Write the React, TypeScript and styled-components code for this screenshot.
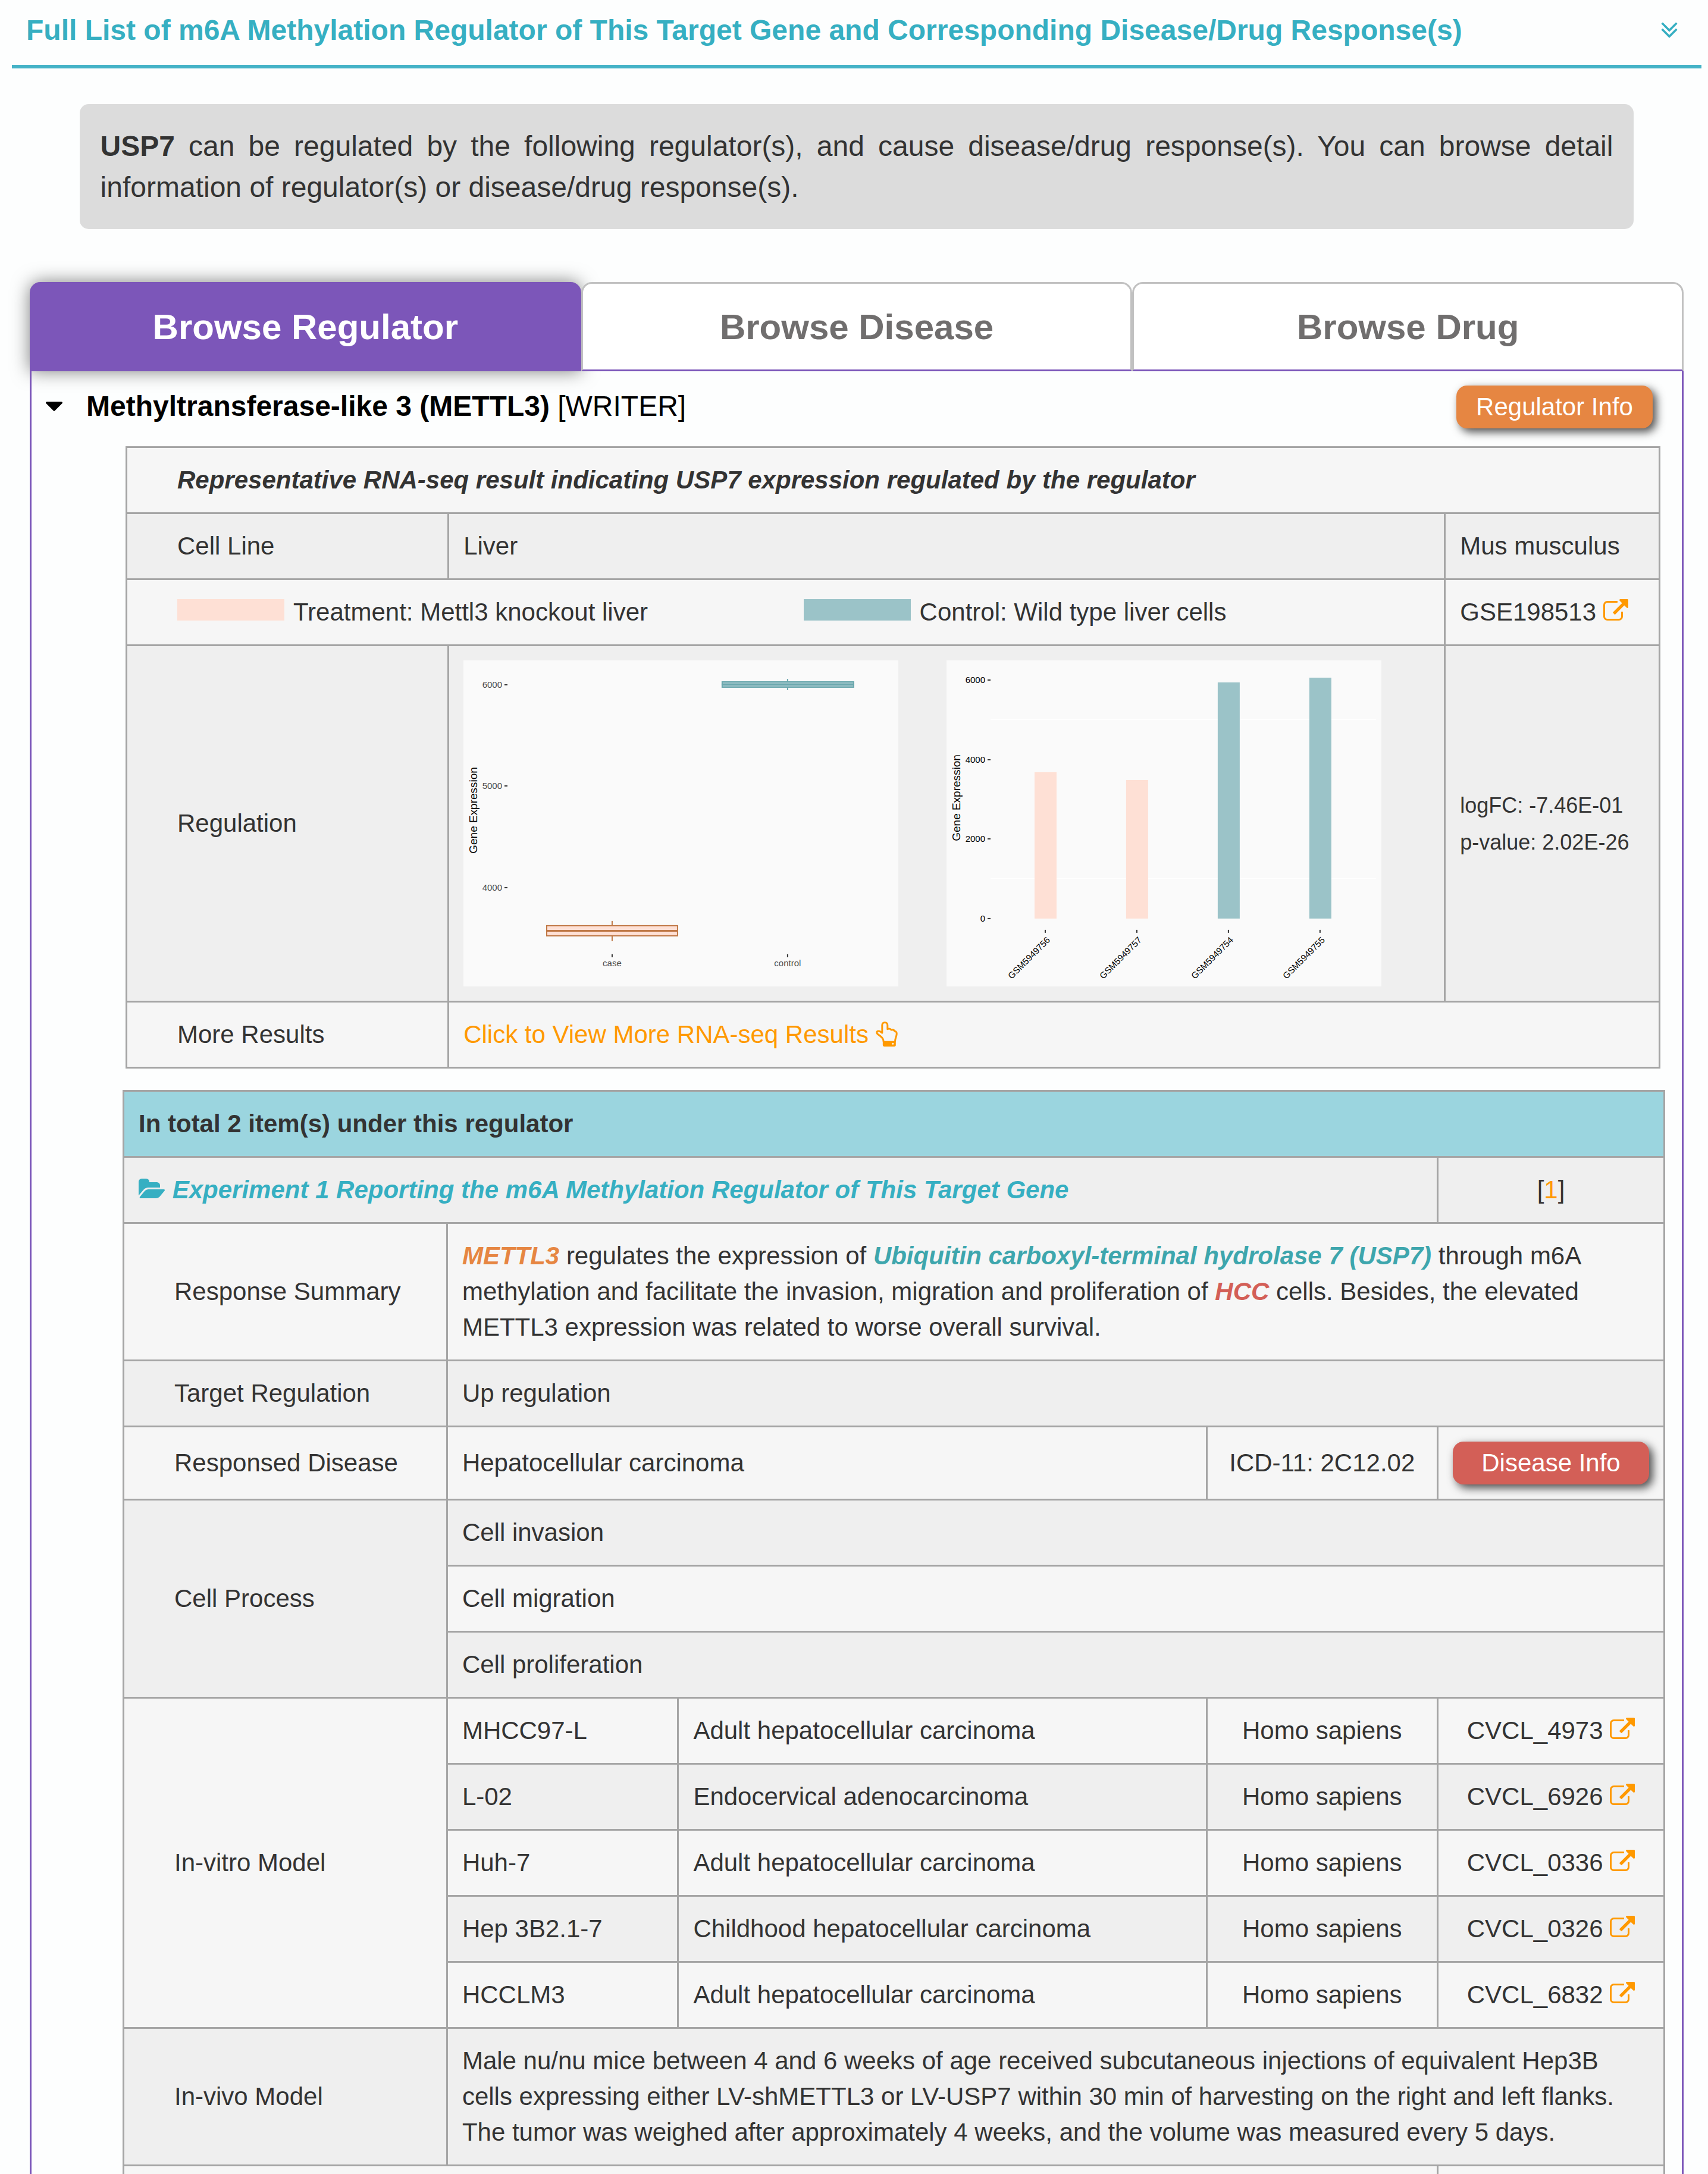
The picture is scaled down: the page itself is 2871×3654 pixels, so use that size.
import React from "react";
import styled, { createGlobalStyle, css } from "styled-components";

const color = {
  page: "#fdfefe",
  text: "#333333",
  teal: "#36afc2",
  purple: "#7c56b9",
  orange: "#e68642",
  red: "#d35f57",
  link: "#ff9900",
  line: "#a5a5a5",
  tabLine: "#c1c1c1",
  rowLight: "#f6f6f6",
  rowDark: "#efefef",
  rowHead: "#9bd5df",
  treatment: "#fee0d5",
  control: "#9bc3c8",
};

const GlobalStyle = createGlobalStyle`
  *, *::before, *::after { box-sizing: border-box; }
  body {
    margin: 0;
    background: ${color.page};
    color: ${color.text};
    font-family: "Liberation Sans", Arial, Helvetica, sans-serif;
    font-size: 42px;
    line-height: 60px;
  }
  h2, p { margin: 0; }
  button { font-family: inherit; cursor: pointer; }
  a { text-decoration: none; }
`;

const Page = styled.div`
  height: 100vh;
  overflow: hidden;
  padding: 0 11px 0 20px;
  display: flex;
  flex-direction: column;
`;

const SectionHeader = styled.header`
  display: flex;
  align-items: center;
  justify-content: space-between;
  padding: 21px 30px 28px 24px;
  border-bottom: 6px solid #45b3c7;
  color: ${color.teal};
`;

const SectionTitle = styled.h2`
  font-size: 48px;
  line-height: 60px;
  font-weight: bold;
`;

const CollapseButton = styled.button`
  display: flex;
  padding: 0;
  border: 0;
  background: none;
  color: inherit;
`;

const Notice = styled.p`
  margin: 60px 4% 89px;
  padding: 36px 35px;
  border-radius: 15px;
  background: #dcdcdc;
  font-size: 48px;
  line-height: 69px;
  text-align: justify;
`;

const TabList = styled.div`
  display: flex;
  margin: 0 30px;
`;

const Tab = styled.button<{ $active?: boolean }>`
  flex: 1 1 0;
  height: 150px;
  padding: 2px 0 0;
  border: 3px solid ${color.tabLine};
  border-bottom-color: ${color.purple};
  border-radius: 18px 18px 0 0;
  background: #ffffff;
  color: #706e6e;
  font-size: 60px;
  font-weight: bold;
  line-height: 84px;
  ${({ $active }) =>
    $active &&
    css`
      border-color: ${color.purple};
      background: ${color.purple};
      color: #ffffff;
      box-shadow: 0 0 30px rgba(0, 0, 0, 0.5);
    `}
`;

const Panel = styled.section`
  flex: 1 0 auto;
  margin: 0 30px;
  border: solid ${color.purple};
  border-width: 0 3px;
`;

const RegulatorBar = styled.div`
  display: flex;
  justify-content: space-between;
  align-items: flex-start;
  padding: 24px 49px 30px 24px;
`;

const RegulatorToggle = styled.button`
  display: flex;
  align-items: center;
  gap: 40px;
  padding: 0;
  border: 0;
  background: none;
  color: #000000;
  font-size: 48px;
  line-height: 69px;
`;

const InfoLink = styled.a<{ $tone: string }>`
  display: block;
  width: 330px;
  padding: 6px 0;
  border-radius: 18px;
  background: ${({ $tone }) => $tone};
  box-shadow: 6px 6px 15px rgba(0, 0, 0, 0.7);
  color: #ffffff;
  text-align: center;
`;

const Grid = styled.table`
  border-collapse: collapse;
  table-layout: fixed;

  td, th {
    padding: 24px;
    border: 3px solid ${color.line};
    text-align: left;
    font-weight: normal;
  }
  tr:nth-child(odd) { background: ${color.rowLight}; }
  tr:nth-child(even) { background: ${color.rowDark}; }
`;

const SequencingGrid = styled(Grid)`
  width: calc(100% - 194px);
  margin: 0 36px 36px 158px;
`;

const ExperimentGrid = styled(Grid)`
  width: calc(100% - 181px);
  margin: 0 28px 0 153px;
`;

const Col = styled.col<{ $width?: string }>`
  width: ${({ $width }) => $width ?? "auto"};
`;

const HeadCell = styled.th`
  && {
    background: ${color.rowHead};
    font-weight: bold;
  }
`;

const LabelCell = styled.th`
  && { padding-left: 84px; }
`;

const CaptionCell = styled(LabelCell)`
  && { font-weight: bold; font-style: italic; }
`;

const LegendCell = styled.td`
  && { padding-left: 84px; }
`;

const CenterCell = styled.td`
  && { text-align: center; }
`;

const FillerCell = styled.td`
  height: 111px;
`;

const Stat = styled.span`
  font-size: 36px;
`;

const Legend = styled.div`
  display: grid;
  grid-template-columns: 1fr 1fr;
`;

const Swatch = styled.span<{ $fill: string }>`
  display: inline-block;
  width: 180px;
  height: 36px;
  margin-right: 15px;
  background: ${({ $fill }) => $fill};
`;

const ChartPair = styled.div`
  display: flex;
  gap: 5%;
`;

const Chart = styled.svg`
  display: block;
  width: 45%;
  background: #fafafa;
  font-size: 15px;
`;

const TextLink = styled.a`
  color: ${color.link};
`;

const PlainLink = styled.a`
  color: inherit;
  white-space: nowrap;
`;

const Term = styled.strong<{ $tone: string }>`
  font-style: italic;
  color: ${({ $tone }) => $tone};
`;

const InlineIcon = styled.svg`
  vertical-align: -6px;
`;

const ExternalIcon = () => (
  <InlineIcon width="42" height="42" viewBox="0 0 1792 1792" fill={color.link} aria-hidden="true">
    <path d="M1408 928v320q0 119-84.5 203.5t-203.5 84.5h-832q-119 0-203.5-84.5t-84.5-203.5v-832q0-119 84.5-203.5t203.5-84.5h704q14 0 23 9t9 23v64q0 14-9 23t-23 9h-704q-66 0-113 47t-47 113v832q0 66 47 113t113 47h832q66 0 113-47t47-113v-320q0-14 9-23t23-9h64q14 0 23 9t9 23zm384-864v512q0 26-19 45t-45 19-45-19l-176-176-652 652q-10 10-23 10t-23-10l-114-114q-10-10-10-23t10-23l652-652-176-176q-19-19-19-45t19-45 45-19h512q26 0 45 19t19 45z" />
  </InlineIcon>
);

const FolderIcon = () => (
  <InlineIcon width="45" height="42" viewBox="0 0 1920 1792" fill={color.teal} aria-hidden="true">
    <path d="M1879 952q0 31-31 66l-336 396q-43 51-120.5 86.5t-143.5 35.5h-1088q-34 0-60.5-13t-26.5-43q0-31 31-66l336-396q43-51 120.5-86.5t143.5-35.5h1088q34 0 60.5 13t26.5 43zm-343-344v160h-832q-94 0-197 47.5t-164 119.5l-337 396-5 6q0-4-.5-12.5t-.5-12.5v-960q0-92 66-158t158-66h320q92 0 158 66t66 158v32h544q92 0 158 66t66 158z" />
  </InlineIcon>
);

const DoubleChevronIcon = () => (
  <svg width="48" height="48" viewBox="0 0 1792 1792" fill="currentColor" aria-hidden="true">
    <path d="M1395 864q0 13-10 23l-466 466q-10 10-23 10t-23-10l-466-466q-10-10-10-23t10-23l50-50q10-10 23-10t23 10l393 393 393-393q10-10 23-10t23 10l50 50q10 10 10 23zm0-384q0 13-10 23l-466 466q-10 10-23 10t-23-10l-466-466q-10-10-10-23t10-23l50-50q10-10 23-10t23 10l393 393 393-393q10-10 23-10t23 10l50 50q10 10 10 23z" />
  </svg>
);

const CaretIcon = () => (
  <svg width="28" height="16" viewBox="384 640 1024 576" fill="currentColor" aria-hidden="true">
    <path d="M1408 704q0 26-19 45l-448 448q-19 19-45 19t-45-19l-448-448q-19-19-19-45t19-45 45-19h896q26 0 45 19t19 45z" />
  </svg>
);

const HandIcon = () => (
  <InlineIcon width="37" height="42" viewBox="0 0 110 126" aria-hidden="true">
    <path
      d="M39 101C39 86 31 80 20 71L9 63C3 58 4 48 13 48C20 47 26 52 32 57V18C32 0 59 0 59 18V38C66 35 74 37 78 42C86 40 93 43 95 49C103 49 106 55 105 64C104 76 97 85 97 101"
      fill="none"
      stroke={color.link}
      strokeWidth="9"
      strokeLinejoin="round"
    />
    <path d="M35 98H101V118Q101 126 93 126H43Q35 126 35 118Z" fill={color.link} />
    <circle cx="86" cy="112" r="4.5" fill={color.rowLight} />
  </InlineIcon>
);

const AXIS = "#333333";
const TICK_TEXT = "#4d4d4d";

const BoxPlot = () => (
  <Chart viewBox="0 0 731 548" role="img" aria-label="Gene expression box plot">
    <text transform="translate(23 252) rotate(-90)" textAnchor="middle" fontSize="19">
      Gene Expression
    </text>
    {[
      { value: 6000, y: 41 },
      { value: 5000, y: 211 },
      { value: 4000, y: 382 },
    ].map(({ value, y }) => (
      <g key={value}>
        <text x="65" y={y + 5} textAnchor="end" fill={TICK_TEXT}>
          {value}
        </text>
        <path d={`M69 ${y}h5`} stroke={AXIS} strokeWidth="2" />
      </g>
    ))}
    {[
      { name: "case", x: 250 },
      { name: "control", x: 545 },
    ].map(({ name, x }) => (
      <g key={name}>
        <path d={`M${x} 494v5`} stroke={AXIS} strokeWidth="2" />
        <text x={x} y="514" textAnchor="middle" fill={TICK_TEXT}>
          {name}
        </text>
      </g>
    ))}
    <g stroke="#6aa7ad" strokeWidth="2">
      <path d="M545 31V50" />
      <rect x="435" y="36" width="221" height="9" fill={color.control} />
      <path d="M434 40.5H657" strokeWidth="3" />
    </g>
    <g stroke="#bf7745" strokeWidth="2">
      <path d="M250 438V472" />
      <rect x="140" y="446" width="220" height="17" fill={color.treatment} />
      <path d="M139 454.5H361" strokeWidth="3" />
    </g>
  </Chart>
);

const BarChart = () => (
  <Chart viewBox="0 0 731 548" role="img" aria-label="Gene expression by sample">
    <path d="M74 99.5H722M74 366.5H722" stroke="#ffffff" />
    <text transform="translate(23 231) rotate(-90)" textAnchor="middle" fontSize="19">
      Gene Expression
    </text>
    {[
      { value: 6000, y: 33 },
      { value: 4000, y: 167 },
      { value: 2000, y: 300 },
      { value: 0, y: 434 },
    ].map(({ value, y }) => (
      <g key={value}>
        <text x="65" y={y + 5} textAnchor="end">
          {value}
        </text>
        <path d={`M69 ${y}h5`} stroke={AXIS} strokeWidth="2" />
      </g>
    ))}
    {[
      { name: "GSM5949756", x: 148, top: 188, fill: color.treatment },
      { name: "GSM5949757", x: 302, top: 201, fill: color.treatment },
      { name: "GSM5949754", x: 456, top: 37, fill: color.control },
      { name: "GSM5949755", x: 610, top: 29, fill: color.control },
    ].map(({ name, x, top, fill }) => (
      <g key={name}>
        <rect x={x} y={top} width="37" height={434 - top} fill={fill} />
        <path d={`M${x + 18} 453v5`} stroke={AXIS} strokeWidth="2" />
        <text transform={`translate(${x + 27} 471) rotate(-45)`} textAnchor="end">
          {name}
        </text>
      </g>
    ))}
  </Chart>
);

const cellLines = [
  { name: "MHCC97-L", disease: "Adult hepatocellular carcinoma", id: "CVCL_4973" },
  { name: "L-02", disease: "Endocervical adenocarcinoma", id: "CVCL_6926" },
  { name: "Huh-7", disease: "Adult hepatocellular carcinoma", id: "CVCL_0336" },
  { name: "Hep 3B2.1-7", disease: "Childhood hepatocellular carcinoma", id: "CVCL_0326" },
  { name: "HCCLM3", disease: "Adult hepatocellular carcinoma", id: "CVCL_6832" },
];

const processes = ["Cell invasion", "Cell migration", "Cell proliferation"];

const SequencingTable = () => (
  <SequencingGrid>
    <colgroup>
      <Col $width="21%" />
      <Col />
      <Col $width="14%" />
    </colgroup>
    <tbody>
      <tr>
        <CaptionCell colSpan={3}>
          Representative RNA-seq result indicating USP7 expression regulated by the regulator
        </CaptionCell>
      </tr>
      <tr>
        <LabelCell scope="row">Cell Line</LabelCell>
        <td>Liver</td>
        <td>Mus musculus</td>
      </tr>
      <tr>
        <LegendCell colSpan={2}>
          <Legend>
            <span>
              <Swatch $fill={color.treatment} />
              Treatment: Mettl3 knockout liver
            </span>
            <span>
              <Swatch $fill={color.control} />
              Control: Wild type liver cells
            </span>
          </Legend>
        </LegendCell>
        <td>
          <PlainLink href="#gse198513">
            GSE198513 <ExternalIcon />
          </PlainLink>
        </td>
      </tr>
      <tr>
        <LabelCell scope="row">Regulation</LabelCell>
        <td>
          <ChartPair>
            <BoxPlot />
            <BarChart />
          </ChartPair>
        </td>
        <td>
          <Stat>logFC: -7.46E-01</Stat>
          <br />
          <Stat>p-value: 2.02E-26</Stat>
        </td>
      </tr>
      <tr>
        <LabelCell scope="row">More Results</LabelCell>
        <td colSpan={2}>
          <TextLink href="#more-results">
            Click to View More RNA-seq Results <HandIcon />
          </TextLink>
        </td>
      </tr>
    </tbody>
  </SequencingGrid>
);

const ExperimentTable = () => (
  <ExperimentGrid>
    <colgroup>
      <Col $width="21%" />
      <Col $width="15%" />
      <Col />
      <Col $width="15%" />
      <Col $width="381px" />
    </colgroup>
    <tbody>
      <tr>
        <HeadCell colSpan={5}>In total 2 item(s) under this regulator</HeadCell>
      </tr>
      <tr>
        <td colSpan={4}>
          <FolderIcon />{" "}
          <Term $tone={color.teal}>Experiment 1 Reporting the m6A Methylation Regulator of This Target Gene</Term>
        </td>
        <CenterCell>
          [<TextLink href="#reference-1">1</TextLink>]
        </CenterCell>
      </tr>
      <tr>
        <LabelCell scope="row">Response Summary</LabelCell>
        <td colSpan={4}>
          <Term $tone={color.orange}>METTL3</Term> regulates the expression of{" "}
          <Term $tone="#3ea6ad">Ubiquitin carboxyl-terminal hydrolase 7 (USP7)</Term> through m6A methylation and
          facilitate the invasion, migration and proliferation of <Term $tone={color.red}>HCC</Term> cells. Besides,
          the elevated METTL3 expression was related to worse overall survival.
        </td>
      </tr>
      <tr>
        <LabelCell scope="row">Target Regulation</LabelCell>
        <td colSpan={4}>Up regulation</td>
      </tr>
      <tr>
        <LabelCell scope="row">Responsed Disease</LabelCell>
        <td colSpan={2}>Hepatocellular carcinoma</td>
        <CenterCell>ICD-11: 2C12.02</CenterCell>
        <td>
          <InfoLink $tone={color.red} href="#disease">
            Disease Info
          </InfoLink>
        </td>
      </tr>
      {processes.map((name, i) => (
        <tr key={name}>
          {i === 0 && (
            <LabelCell scope="rowgroup" rowSpan={processes.length}>
              Cell Process
            </LabelCell>
          )}
          <td colSpan={4}>{name}</td>
        </tr>
      ))}
      {cellLines.map((line, i) => (
        <tr key={line.id}>
          {i === 0 && (
            <LabelCell scope="rowgroup" rowSpan={cellLines.length}>
              In-vitro Model
            </LabelCell>
          )}
          <td>{line.name}</td>
          <td>{line.disease}</td>
          <CenterCell>Homo sapiens</CenterCell>
          <CenterCell>
            <PlainLink href={`#${line.id}`}>
              {line.id} <ExternalIcon />
            </PlainLink>
          </CenterCell>
        </tr>
      ))}
      <tr>
        <LabelCell scope="row">In-vivo Model</LabelCell>
        <td colSpan={4}>
          Male nu/nu mice between 4 and 6 weeks of age received subcutaneous injections of equivalent Hep3B cells
          expressing either LV-shMETTL3 or LV-USP7 within 30 min of harvesting on the right and left flanks. The tumor
          was weighed after approximately 4 weeks, and the volume was measured every 5 days.
        </td>
      </tr>
      <tr>
        <FillerCell colSpan={4} />
        <FillerCell />
      </tr>
    </tbody>
  </ExperimentGrid>
);

export default function App() {
  return (
    <>
      <GlobalStyle />
      <Page>
        <SectionHeader>
          <SectionTitle>
            Full List of m6A Methylation Regulator of This Target Gene and Corresponding Disease/Drug Response(s)
          </SectionTitle>
          <CollapseButton type="button" aria-label="Collapse section">
            <DoubleChevronIcon />
          </CollapseButton>
        </SectionHeader>

        <Notice>
          <strong>USP7</strong> can be regulated by the following regulator(s), and cause disease/drug response(s). You
          can browse detail information of regulator(s) or disease/drug response(s).
        </Notice>

        <TabList role="tablist">
          <Tab type="button" role="tab" aria-selected="true" $active>
            Browse Regulator
          </Tab>
          <Tab type="button" role="tab" aria-selected="false">
            Browse Disease
          </Tab>
          <Tab type="button" role="tab" aria-selected="false">
            Browse Drug
          </Tab>
        </TabList>

        <Panel role="tabpanel">
          <RegulatorBar>
            <RegulatorToggle type="button" aria-expanded="true">
              <CaretIcon />
              <span>
                <strong>Methyltransferase-like 3 (METTL3)</strong> [WRITER]
              </span>
            </RegulatorToggle>
            <InfoLink $tone={color.orange} href="#regulator">
              Regulator Info
            </InfoLink>
          </RegulatorBar>
          <SequencingTable />
          <ExperimentTable />
        </Panel>
      </Page>
    </>
  );
}
